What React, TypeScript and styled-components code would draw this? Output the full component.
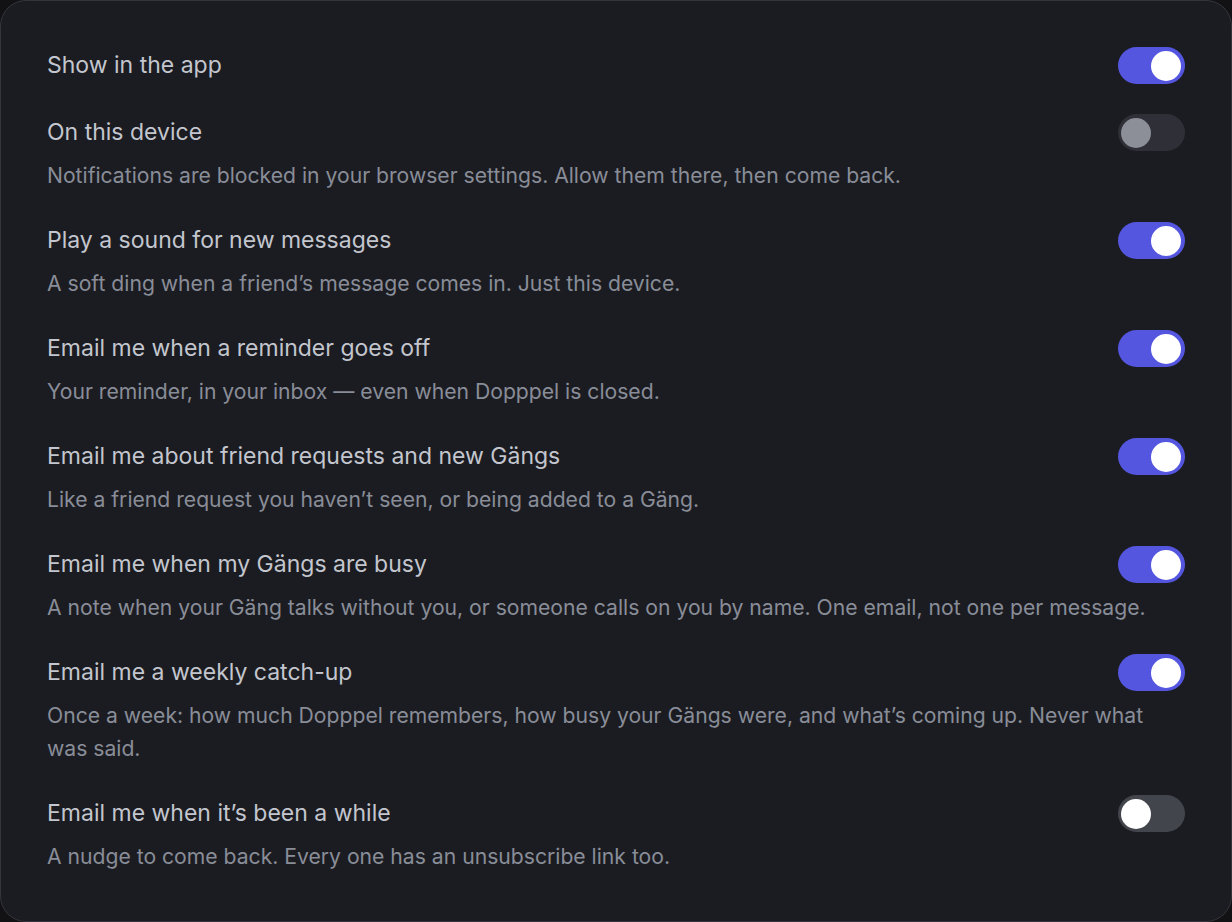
import React, { useState } from 'react'
import styled, { createGlobalStyle } from 'styled-components'

const GlobalStyle = createGlobalStyle`
  html, body {
    margin: 0;
    padding: 0;
    background: #121215;
  }
  body {
    font-family: Inter, 'Noto Sans', sans-serif;
    -webkit-font-smoothing: antialiased;
  }
`

const Panel = styled.section`
  box-sizing: border-box;
  width: 1232px;
  min-height: 922px;
  background: #1b1c21;
  border: 1px solid #34353c;
  border-radius: 26px;
  padding: 46px;
  display: flex;
  flex-direction: column;
  gap: 30px;
`

const Setting = styled.div`
  display: flex;
  flex-direction: column;
  gap: 8px;
`

const SettingHead = styled.div`
  display: flex;
  align-items: center;
  justify-content: space-between;
  min-height: 37px;
`

const Title = styled.span`
  font-size: 23px;
  line-height: 33px;
  color: #c3c6ce;
`

const Description = styled.p`
  margin: 0;
  font-size: 21.15px;
  line-height: 33px;
  color: #898d98;
`

const Track = styled.button<{ $on: boolean; $disabled?: boolean }>`
  flex-shrink: 0;
  position: relative;
  width: 67px;
  height: 37px;
  border: none;
  padding: 0;
  border-radius: 999px;
  cursor: ${({ $disabled }) => ($disabled ? 'not-allowed' : 'pointer')};
  background: ${({ $on, $disabled }) =>
    $disabled ? '#2f3037' : $on ? '#5556e0' : '#43454d'};
  transition: background 0.15s;
`

const Knob = styled.span<{ $on: boolean; $disabled?: boolean }>`
  position: absolute;
  top: 3.5px;
  left: ${({ $on }) => ($on ? '33px' : '3px')};
  width: 30px;
  height: 30px;
  border-radius: 50%;
  background: ${({ $disabled }) => ($disabled ? '#8c8e98' : '#ffffff')};
  transition: left 0.15s;
`

interface Item {
  title: string
  description?: string
  on: boolean
  disabled?: boolean
}

const items: Item[] = [
  { title: 'Show in the app', on: true },
  {
    title: 'On this device',
    description:
      'Notifications are blocked in your browser settings. Allow them there, then come back.',
    on: false,
    disabled: true,
  },
  {
    title: 'Play a sound for new messages',
    description: 'A soft ding when a friend’s message comes in. Just this device.',
    on: true,
  },
  {
    title: 'Email me when a reminder goes off',
    description: 'Your reminder, in your inbox — even when Dopppel is closed.',
    on: true,
  },
  {
    title: 'Email me about friend requests and new Gängs',
    description: 'Like a friend request you haven’t seen, or being added to a Gäng.',
    on: true,
  },
  {
    title: 'Email me when my Gängs are busy',
    description:
      'A note when your Gäng talks without you, or someone calls on you by name. One email, not one per message.',
    on: true,
  },
  {
    title: 'Email me a weekly catch-up',
    description:
      'Once a week: how much Dopppel remembers, how busy your Gängs were, and what’s coming up. Never what was said.',
    on: true,
  },
  {
    title: 'Email me when it’s been a while',
    description: 'A nudge to come back. Every one has an unsubscribe link too.',
    on: false,
  },
]

const Toggle: React.FC<{ on: boolean; disabled?: boolean; onChange: () => void }> = ({
  on,
  disabled,
  onChange,
}) => (
  <Track
    $on={on}
    $disabled={disabled}
    role="switch"
    aria-checked={on}
    onClick={() => !disabled && onChange()}
  >
    <Knob $on={on} $disabled={disabled} />
  </Track>
)

export default function App() {
  const [state, setState] = useState(items.map((i) => i.on))

  return (
    <>
      <GlobalStyle />
      <Panel>
        {items.map((item, i) => (
          <Setting key={item.title}>
            <SettingHead>
              <Title>{item.title}</Title>
              <Toggle
                on={state[i]}
                disabled={item.disabled}
                onChange={() =>
                  setState((s) => s.map((v, j) => (j === i ? !v : v)))
                }
              />
            </SettingHead>
            {item.description && <Description>{item.description}</Description>}
          </Setting>
        ))}
      </Panel>
    </>
  )
}
